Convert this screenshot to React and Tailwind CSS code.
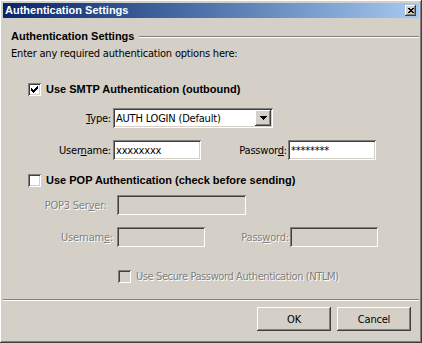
import React from 'react'

const sunken = 'shadow-[inset_1px_1px_#808080,inset_-1px_-1px_#ffffff,inset_2px_2px_#404040,inset_-2px_-2px_#d4d0c8]'
const raised = 'shadow-[inset_-1px_-1px_#404040,inset_1px_1px_#ffffff,inset_-2px_-2px_#808080,inset_2px_2px_#d4d0c8]'
const emboss = 'text-[#808080] [text-shadow:1px_1px_0_#ffffff]'
const bold = "font-['Liberation_Sans',sans-serif] font-bold tracking-normal"

function Check({ checked, disabled }) {
  return (
    <span className={`flex h-[13px] w-[13px] shrink-0 items-center justify-center ${sunken} ${disabled ? 'bg-[#d4d0c8]' : 'bg-white'}`}>
      {checked && (
        <svg width="7" height="7" viewBox="0 0 7 7" shapeRendering="crispEdges">
          <path d="M0 2h1v1h1v1h1v-1h1v-1h1v-1h1v-1h1v3h-1v1h-1v1h-1v1h-1v1h-1v-1h-1v-1h-1v-1h-1z" fill="#000" />
        </svg>
      )}
    </span>
  )
}

function Field({ width, value, disabled }) {
  return (
    <div className={`flex h-[20px] items-center pl-[3px] ${width} ${sunken} ${disabled ? 'bg-[#d4d0c8]' : 'bg-white'}`}>
      <span className="leading-none text-black">{value}</span>
    </div>
  )
}

function Button({ children }) {
  return (
    <button type="button" className={`flex h-[24px] w-[74px] items-center justify-center bg-[#d4d0c8] text-black ${raised}`}>
      {children}
    </button>
  )
}

export default function App() {
  return (
    <div className={`flex h-[343px] w-[422px] flex-col bg-[#d4d0c8] p-[3px] font-['DejaVu_Sans_Condensed','Liberation_Sans',sans-serif] text-[11px] leading-[13px] tracking-[-0.2px] text-black ${raised}`}>
      <div className="flex h-[15px] shrink-0 items-center justify-between bg-gradient-to-r from-[#0a246a] to-[#a6caf0] pl-[2px] pr-[3px]">
        <span className={`${bold} text-white`}>Authentication Settings</span>
        <span className={`flex h-[11px] w-[11px] items-center justify-center bg-[#d4d0c8] ${raised}`}>
          <svg width="6" height="5" viewBox="0 0 6 5" shapeRendering="crispEdges">
            <path d="M0 0h2v1h2v-1h2v1h-1v1h-1v1h1v1h1v1h-2v-1h-2v1h-2v-1h1v-1h1v-1h-1v-1h-1z" fill="#000" />
          </svg>
        </span>
      </div>

      <div className="flex flex-col pl-[8px] pr-0">
        <div className="mt-[12px] flex h-[13px] items-center">
          <span className={bold}>Authentication Settings</span>
          <div className="ml-[5px] flex-1 border-t border-b border-t-[#808080] border-b-white" />
        </div>
        <div className="mt-[4px] h-[13px]">Enter any required authentication options here:</div>

        <label className="mt-[23px] flex h-[13px] items-center gap-[5px] pl-[17px]">
          <Check checked />
          <span className={bold}>Use SMTP Authentication (outbound)</span>
        </label>

        <div className="mt-[12px] flex h-[20px] items-center">
          <span className="w-[102px] pr-[2px] text-right"><u>T</u>ype:</span>
          <div className={`flex h-[20px] w-[160px] items-center justify-between bg-white pl-[3px] pr-[2px] ${sunken}`}>
            <span>AUTH LOGIN (Default)</span>
            <span className={`flex h-[16px] w-[16px] items-center justify-center bg-[#d4d0c8] ${raised}`}>
              <svg width="7" height="4" viewBox="0 0 7 4" shapeRendering="crispEdges">
                <path d="M0 0h7v1h-1v1h-1v1h-1v1h-1v-1h-1v-1h-1v-1h-1z" fill="#000" />
              </svg>
            </span>
          </div>
        </div>

        <div className="mt-[12px] flex h-[20px] items-center">
          <span className="w-[102px] pr-[2px] text-right">User<u>n</u>ame:</span>
          <Field width="w-[88px]" value="xxxxxxxx" />
          <span className="w-[87px] pr-[1px] text-right">Passwor<u>d</u>:</span>
          <Field width="w-[88px]" value="********" />
        </div>

        <label className="mt-[14px] flex h-[13px] items-center gap-[5px] pl-[17px]">
          <Check />
          <span className={bold}>Use POP Authentication (check before sending)</span>
        </label>

        <div className="mt-[8px] flex h-[20px] items-center">
          <span className={`w-[106px] pr-[10px] text-right ${emboss}`}>POP3 Ser<u>v</u>er:</span>
          <Field width="w-[129px]" disabled />
        </div>

        <div className="mt-[12px] flex h-[20px] items-center">
          <span className={`w-[106px] pr-[4px] text-right ${emboss}`}>Usernam<u>e</u>:</span>
          <Field width="w-[88px]" disabled />
          <span className={`w-[85px] pr-[1px] text-right ${emboss}`}>Pass<u>w</u>ord:</span>
          <Field width="w-[88px]" disabled />
        </div>

        <label className={`mt-[23px] flex h-[13px] items-center gap-[5px] pl-[107px] ${emboss}`}>
          <Check disabled />
          <span className="tracking-[-0.4px]">Use Secure Password Authentication (NTLM)</span>
        </label>
      </div>

      <div className="mt-[16px] border-t border-b border-t-[#808080] border-b-white" />

      <div className="mt-[6px] flex justify-end gap-[6px] pr-[8px]">
        <Button>OK</Button>
        <Button>Cancel</Button>
      </div>
    </div>
  )
}
